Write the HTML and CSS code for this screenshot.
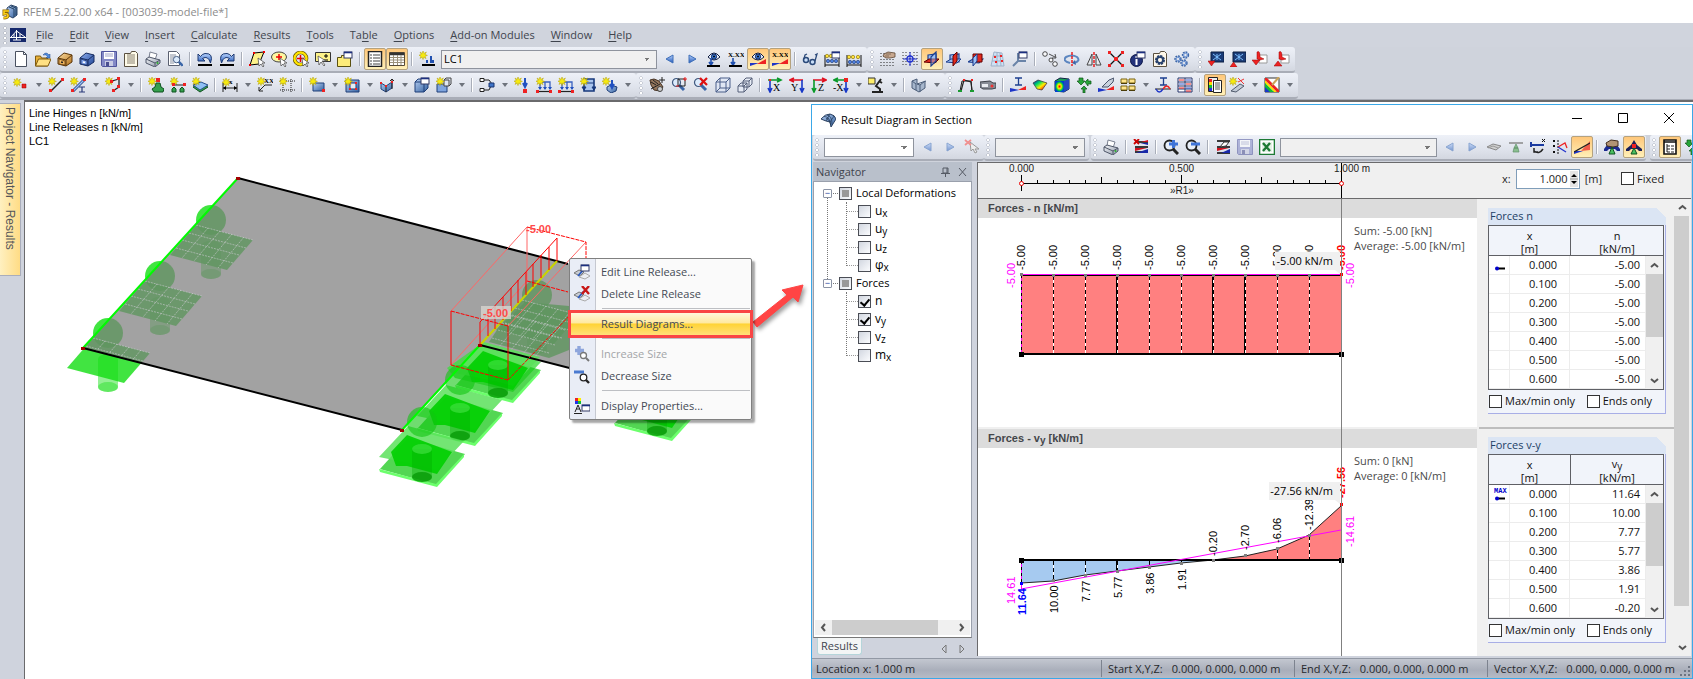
FILE: index.html
```html
<!DOCTYPE html>
<html lang="en">
<head>
<meta charset="utf-8">
<title>RFEM 5.22.00 x64 - [003039-model-file*]</title>
<link rel="stylesheet" href="styles.css">
</head>
<body>
<svg class="defs" aria-hidden="true">
  <defs>
    <linearGradient id="g-blue" x1="0" y1="0" x2="1" y2="1"><stop offset="0" stop-color="#b7d0f4"/><stop offset="1" stop-color="#34619f"/></linearGradient>
    <linearGradient id="g-tan" x1="0" y1="0" x2="1" y2="1"><stop offset="0" stop-color="#ffe2a8"/><stop offset="1" stop-color="#b06c14"/></linearGradient>
    <linearGradient id="g-cab" x1="0" y1="0" x2="1" y2="1"><stop offset="0" stop-color="#8fb0f0"/><stop offset="1" stop-color="#1f4394"/></linearGradient>
    <linearGradient id="g-grey" x1="0" y1="0" x2="1" y2="1"><stop offset="0" stop-color="#f4f6fa"/><stop offset="1" stop-color="#8a93a3"/></linearGradient>
    <radialGradient id="g-fem"><stop offset="0" stop-color="#f00"/><stop offset=".4" stop-color="#fe0"/><stop offset=".75" stop-color="#0c4"/><stop offset="1" stop-color="#04c"/></radialGradient>
    <linearGradient id="g-rain" x1="0" y1="0" x2="1" y2="1"><stop offset="0" stop-color="#00c"/><stop offset=".35" stop-color="#0d6"/><stop offset=".6" stop-color="#fe0"/><stop offset=".85" stop-color="#f20"/></linearGradient>
    <linearGradient id="g-arrow" x1="0" y1="0" x2="0" y2="1"><stop offset="0" stop-color="#bcd6ff"/><stop offset="1" stop-color="#1f56b8"/></linearGradient>
    <path id="star" d="M4 0 5 2.4 7.4 1 6 3.4 8.4 4.4 6 5.2 7 7.6 4.7 6.2 4 8.6 3.2 6.2 1 7.4 2 5.2 0 4.2 2.2 3.4 1 1 3.2 2.4z" fill="#f6ea10" stroke="#b5a000" stroke-width=".5"/>
    <g id="win"><rect x="0" y="0" width="8" height="6" fill="#fff" stroke="#333a66"/><path d="M0 .5h8" stroke="#1c2f80" stroke-width="1.6"/></g>
    <g id="lens"><path d="m6.500 6.500 5.500 5.500" stroke="#3a66a8" stroke-width="3"/><circle cx="4.500" cy="4.500" r="4" fill="#dcebfc" stroke="#3f587e" stroke-width="1.200"/></g>
    <g id="eye"><path d="M0 4q6-8 12 0-6 6-12 0z" fill="#eef4ff" stroke="#101c40"/><circle cx="6" cy="3.600" r="2.600" fill="#3d7cd8" stroke="#0b2560"/><circle cx="6" cy="3.600" r="1" fill="#000"/></g>

    <symbol id="app" viewBox="0 0 16 16"><path d="M5 4 9 1l6 2v8l-4 3-6-3z" fill="url(#g-blue)" stroke="#2c4668"/><path d="m7 3 5 2v8M9 2l5 2v7" fill="none" stroke="#23405e"/><path d="M7 7H2v3q4-1 4 1.500T1.500 14" fill="none" stroke="#8a6500" stroke-width="3"/><path d="M7 7H2v3q4-1 4 1.500T1.500 14" fill="none" stroke="#ffd21a" stroke-width="1.600"/></symbol>
    <symbol id="doc" viewBox="0 0 16 14"><path d="M0 0h16v14H0z" fill="#16296c"/><path d="M0 9.500h16M6.500 2v10M6.500 3 1 9M6.500 3 15 9M4 6v3M10 6v3M3 12h8" stroke="#fff" fill="none"/></symbol>
    <symbol id="dlg" viewBox="0 0 16 16"><path d="M1 7q4-5 9-5 5 1 6 5l-5 8-1-5-4-1z" fill="url(#g-blue)" stroke="#2b4160"/><path d="M4 4.500q5 0 6 5.500M7 3q5 1 5 9M6 9l4-7M10 10l4-6M11 13q-1-5-5-7" stroke="#27405f" stroke-width=".8" fill="none"/></symbol>
    <symbol id="new" viewBox="0 0 16 16"><path d="M2.500.5h8l3 3v12h-11z" fill="#fff" stroke="#4a5160"/><path d="M10.500.5v3h3" fill="none" stroke="#4a5160"/></symbol>
    <symbol id="open" viewBox="0 0 16 16"><path d="M.5 5h5l1 2h6v8H.5z" fill="#e8b13a" stroke="#7e5a10"/><path d="m.5 15 3-7H16l-3 7z" fill="#ffe083" stroke="#7e5a10"/><path d="M8 4q3-4 6 0l1-1v4h-4l1.500-1.500Q11 3 8 4z" fill="#4d8ade" stroke="#234a8c" stroke-width=".5"/></symbol>
    <symbol id="cab" viewBox="0 0 16 16"><path d="m1 7 6-5 8 2v7l-6 4-8-2z" fill="url(#g-tan)" stroke="#5a3508"/><path d="m1 7 8 2v6M9 9l6-5" fill="none" stroke="#5a3508"/><path d="m2 8 6 2v4l-6-1z" fill="#f4b860" stroke="#5a3508" stroke-width=".7"/><path d="m4 11 2 .5" stroke="#222" stroke-width="1.500"/></symbol>
    <symbol id="cabb" viewBox="0 0 16 16"><path d="m1 7 6-5 8 2v7l-6 4-8-2z" fill="url(#g-cab)" stroke="#142a60"/><path d="m1 7 8 2v6M9 9l6-5" fill="none" stroke="#142a60"/><path d="m2 8 6 2v4l-6-1z" fill="#7fa2ea" stroke="#142a60" stroke-width=".7"/><path d="m4 11 2 .5" stroke="#fff" stroke-width="1.500"/></symbol>
    <symbol id="save" viewBox="0 0 16 16"><path d="M.5.5h15v15h-14l-1-1z" fill="#8389c6" stroke="#4f549c"/><path d="M3 1h10v7H3z" fill="#fff"/><path d="M4 3h8M4 5h8" stroke="#a0a4c8"/><path d="M4 10h8v5H4z" fill="#c9cce4"/><path d="M5 11h3v4H5z" fill="#4a4f90"/></symbol>
    <symbol id="tbl" viewBox="0 0 16 16"><path d="M1.500 2.500h6l1-2h4l2 2v13h-13z" fill="#fffbe8" stroke="#5a5040"/><path d="M4 6h8M4 8h8M4 10h8M4 12h8M4 4h8" stroke="#8a8272"/></symbol>
    <symbol id="print" viewBox="0 0 16 16"><path d="m5 1 7 2-2 6-6-2z" fill="#fff" stroke="#7a8090"/><path d="m1 8 3-2 11 3v3l-5 4-9-4z" fill="url(#g-grey)" stroke="#50586a"/><path d="m1 8 9 4 5-3M10 12v3" fill="none" stroke="#50586a"/><circle cx="12.500" cy="12" r="1" fill="#2ab52a"/></symbol>
    <symbol id="prev" viewBox="0 0 16 16"><path d="M1.500.5h8l3 3v11h-11z" fill="#fff" stroke="#5a6070"/><path d="M3 4h6M3 6h5M3 8h3M3 10h3M3 12h4" stroke="#8890a0"/><g transform="translate(6 5) scale(.8)"><use href="#lens"/></g></symbol>
    <symbol id="undo" viewBox="0 0 16 16"><path d="M1 3v7h7L5.500 7.500Q11 4 13.500 12 17 2 8 2.500 5 3 3.500 5.500z" fill="url(#g-arrow)" stroke="#1a3770"/><path d="M1 14h14" stroke="#000" stroke-width="2"/></symbol>
    <symbol id="redo" viewBox="0 0 16 16"><g transform="matrix(-1 0 0 1 16 0)"><path d="M1 3v7h7L5.500 7.500Q11 4 13.500 12 17 2 8 2.500 5 3 3.500 5.500z" fill="url(#g-arrow)" stroke="#1a3770"/><path d="M1 14h14" stroke="#000" stroke-width="2"/></g></symbol>
    <symbol id="selr" viewBox="0 0 16 16"><path d="m5 2 10-1-5 12-9 1z" fill="#fdf28a" stroke="#000"/><path d="M4 1h2v2H4zM14 0h2v2h-2zM0 13h2v2H0z" fill="#e00"/><path d="m9 7 1 8 2-2 2 3 1-1-2-3h3z" fill="#fff" stroke="#555" stroke-width=".8"/></symbol>
    <symbol id="sele" viewBox="0 0 16 16"><ellipse cx="8" cy="6" rx="7.500" ry="5" fill="#fdf6a0" stroke="#444"/><path d="M8 3v6M5 6h6" stroke="#e00" stroke-width="1.500"/><path d="m9 7 1 8 2-2 2 3 1-1-2-3h3z" fill="#fff" stroke="#555" stroke-width=".8"/></symbol>
    <symbol id="selc" viewBox="0 0 16 16"><circle cx="7.500" cy="7.500" r="6" fill="none" stroke="#5a4a00" stroke-width="3.600"/><circle cx="7.500" cy="7.500" r="6" fill="none" stroke="#ffe400" stroke-width="2.400"/><path d="M7.500 4v7M4 7.500h7" stroke="#e00" stroke-width="1.500"/><path d="m9 7 1 8 2-2 2 3 1-1-2-3h3z" fill="#fff" stroke="#555" stroke-width=".8"/></symbol>
    <symbol id="selp" viewBox="0 0 16 16"><path d="M.5 1.500h15v9H.5z" fill="#fdf28a" stroke="#333"/><path d="M11 3v4M9 5h4M9 9h4" stroke="#000"/><path d="m3 5 1 9 2-3 3 4 1-1-3-4h4z" fill="#fff" stroke="#555" stroke-width=".8"/></symbol>
    <symbol id="tabs" viewBox="0 0 16 16"><path d="M.5 6.500h4v-2h4v2h5v9H.5z" fill="#fdec7a" stroke="#5a5010"/><g transform="translate(7 1)"><use href="#win"/></g></symbol>
    <symbol id="pnl1" viewBox="0 0 16 16"><path d="M1.500.5h13v15h-13z" fill="#fff" stroke="#222" stroke-width="1.500"/><path d="M3 4h2M3 7h2M3 10h2M3 13h2M6 4h7M6 7h7M6 10h7M6 13h7" stroke="#444"/></symbol>
    <symbol id="pnl2" viewBox="0 0 16 16"><path d="M.5 1.500h15v13H.5z" fill="#fff" stroke="#554a38"/><path d="M1 3h14" stroke="#333" stroke-width="2.500"/><path d="M1 6.500h14M1 9h14M1 11.500h14M4.500 4v10M8.500 4v10M12 4v10" stroke="#9b917c"/></symbol>
    <symbol id="lc" viewBox="0 0 16 16"><use href="#star"/><path d="M8 9v3M12 5v7M14 9v3" stroke="#2050b0" stroke-width="2"/><path d="M3 14h13" stroke="#000" stroke-width="2"/></symbol>
    <symbol id="la" viewBox="0 0 16 16"><path d="M11 4v8L4 8z" fill="url(#g-arrow)" stroke="#3f6fb8"/></symbol>
    <symbol id="ra" viewBox="0 0 16 16"><path d="M5 4v8l7-4z" fill="url(#g-arrow)" stroke="#3f6fb8"/></symbol>
    <symbol id="eyel" viewBox="0 0 16 16"><g transform="translate(2 2)"><use href="#eye"/></g><path d="M5 7v6m-2-2 2 3 2-3" stroke="#2050b0" stroke-width="1.600" fill="none"/><path d="M1 15h13" stroke="#000" stroke-width="2"/></symbol>
    <symbol id="xxl" viewBox="0 0 16 16"><text x="0" y="6" class="ic-s">X.XX</text><path d="M5 7v6m-2-2 2 3 2-3" stroke="#2050b0" stroke-width="1.600" fill="none"/><path d="M1 15h13" stroke="#000" stroke-width="2"/></symbol>
    <symbol id="eyer" viewBox="0 0 16 16"><g transform="translate(2 2)"><use href="#eye"/></g><path d="M0 15v-3h9z" fill="#1d35c8"/><path d="M16 8v5H7z" fill="#e22"/></symbol>
    <symbol id="xxr" viewBox="0 0 16 16"><text x="0" y="6" class="ic-s">X.XX</text><path d="M0 15v-3h9z" fill="#1d35c8"/><path d="M16 8v5H7z" fill="#e22"/></symbol>
    <symbol id="glass" viewBox="0 0 16 16"><circle cx="4" cy="9" r="2.500" fill="#c9def8" stroke="#2c4a7a" stroke-width="1.500"/><circle cx="10.500" cy="11" r="2.500" fill="#c9def8" stroke="#2c4a7a" stroke-width="1.500"/><path d="M2 8 3 4l2-1M13 10l2-7-2 1" fill="none" stroke="#2c4a7a" stroke-width="1.300"/></symbol>
    <symbol id="abac" viewBox="0 0 16 16"><path d="M1 4v12M15 4v12M1 14h14" stroke="#111" fill="none"/><g fill="#ffe23a" stroke="#806a00" stroke-width=".6"><circle cx="3" cy="5" r="1.700"/><circle cx="7" cy="5" r="1.700"/></g><g fill="#4b7de0" stroke="#1a3570" stroke-width=".6"><circle cx="4" cy="10" r="1.700"/><circle cx="8" cy="10" r="1.700"/><circle cx="12" cy="10" r="1.700"/></g><g transform="translate(8 1)"><use href="#win"/></g></symbol>
    <symbol id="abac2" viewBox="0 0 16 16"><path d="M1 4v12M15 4v12M1 14h14" stroke="#111" fill="none"/><g fill="#ffe23a" stroke="#806a00" stroke-width=".6"><circle cx="3" cy="6" r="1.700"/><circle cx="7" cy="6" r="1.700"/><circle cx="12" cy="6" r="1.700"/></g><g fill="#4b7de0" stroke="#1a3570" stroke-width=".6"><circle cx="4" cy="11" r="1.700"/><circle cx="8" cy="11" r="1.700"/><circle cx="12" cy="11" r="1.700"/></g></symbol>
    <symbol id="gridh" viewBox="0 0 16 16"><path d="M1 2v14M4 2v14M7 2v14M10 2v14M13 2v14" stroke="#222" stroke-dasharray="1 2"/><path d="m4 3 4-2 7 1v4l-5 1-4 0-3-2z" fill="#c8a890" stroke="#5d4634" stroke-width=".8"/><path d="m5 5 4 0m-3-2 5 0" stroke="#5d4634" stroke-width=".6"/></symbol>
    <symbol id="snap" viewBox="0 0 16 16"><path d="M1 1v15M4 1v15M8 1v15M12 1v15M15 1v15" stroke="#333" stroke-dasharray="1 2"/><circle cx="8" cy="8" r="3" fill="none" stroke="#2030d0" stroke-width="1.300"/><path d="M8 1v14M1 8h14" stroke="#2030d0"/></symbol>
    <symbol id="wp1" viewBox="0 0 16 16"><path d="m4 4 8-1v8H4z" fill="#9cc0f4" stroke="#1d3f90" stroke-width="1.200"/><path d="m0 11 5-3h10l-4 4z" fill="#e22a1e" stroke="#600"/><path d="m7 6 5-5v9l-5 5z" fill="#9cc0f4" fill-opacity=".5" stroke="#1d3f90" stroke-width="1.200"/></symbol>
    <symbol id="wp2" viewBox="0 0 16 16"><path d="m4 4 9-1v8H4z" fill="#9cc0f4" stroke="#1d3f90" stroke-width="1.200"/><path d="m0 11 5-3h10l-4 4z" fill="#9cc0f4" stroke="#1d3f90"/><path d="m7 5 4-4v9l-4 5z" fill="#e22a1e" stroke="#600"/></symbol>
    <symbol id="wp3" viewBox="0 0 16 16"><path d="m0 11 5-3h10l-4 4z" fill="#9cc0f4" stroke="#1d3f90" stroke-width="1.200"/><path d="M5 3h9v8H5z" fill="#e22a1e" stroke="#600"/><path d="m5 7 4-4v7l-4 5z" fill="#9cc0f4" stroke="#1d3f90"/></symbol>
    <symbol id="wp4" viewBox="0 0 16 16"><path d="m4 1 8 1 2 13H1z" fill="#cfe0f4" stroke="#9fb2c8"/><path d="M3 5h10M2 10h11M7 1v14M10 2l1 13" stroke="#9fb2c8"/><path d="M4 5h2v2H4zM10 4h2v2h-2zM5 10h2v2H5zM11 9h2v2h-2z" fill="#e22"/></symbol>
    <symbol id="cs" viewBox="0 0 16 16"><path d="M6 2v8l8 0M6 10l-5 5" fill="none" stroke="#6a84a8" stroke-width="2"/><g transform="translate(7 1)"><use href="#win"/></g></symbol>
    <symbol id="copy" viewBox="0 0 16 16"><g fill="#f8f9fb" stroke="#222" stroke-width=".8"><circle cx="3" cy="3" r="2.300"/><circle cx="9" cy="9" r="2"/><circle cx="13" cy="13" r="2.300"/></g><path d="m7 3 6 3m-3 1 4 0-1-4" fill="none" stroke="#222" stroke-width=".8"/></symbol>
    <symbol id="rot" viewBox="0 0 16 16"><path d="M6 12q-8-2-4-6 6-3 11 0 4 4-3 6" fill="none" stroke="#5c86c0" stroke-width="2"/><path d="m11 9-3 3 4 2z" fill="#3c66a8"/><path d="M8 1v14" stroke="#e00" stroke-width="1.300" stroke-dasharray="3 1"/></symbol>
    <symbol id="mir" viewBox="0 0 16 16"><path d="M6 3v11H1zM10 3v11h5z" fill="#e8ebf0" stroke="#444"/><path d="M8 1v15" stroke="#e00" stroke-width="1.300" stroke-dasharray="3 1"/></symbol>
    <symbol id="cross" viewBox="0 0 16 16"><path d="m1 1 14 14M15 1 1 15" stroke="#111" stroke-width="1.300"/><path d="M0 0h3v3H0zM13 0h3v3h-3zM0 13h3v3H0zM13 13h3v3h-3zM6 6h4v4H6z" fill="#e22"/></symbol>
    <symbol id="info" viewBox="0 0 16 16"><circle cx="6.500" cy="9.500" r="6" fill="#23327a" stroke="#0c1648"/><path d="M6.500 8v6M6.500 5v2" stroke="#fff" stroke-width="2"/><g transform="translate(7 1)"><use href="#win"/></g></symbol>
    <symbol id="gearc" viewBox="0 0 16 16"><path d="M1.500 2.500h6l1-2h4l2 2v13h-13z" fill="#fff8ea" stroke="#5a5040"/><circle cx="8" cy="9" r="3.500" fill="none" stroke="#27406c" stroke-width="3" stroke-dasharray="2 .7"/><circle cx="8" cy="9" r="3" fill="none" stroke="#27406c" stroke-width="1.500"/></symbol>
    <symbol id="gears" viewBox="0 0 16 16"><g fill="none" stroke="#3c66a8" stroke-width="2.400" stroke-dasharray="1.600 .7"><circle cx="4" cy="8" r="2.500"/><circle cx="11.500" cy="4" r="2.500"/><circle cx="10" cy="12" r="2.500"/></g><g fill="none" stroke="#7ea2dc"><circle cx="4" cy="8" r="2"/><circle cx="11.500" cy="4" r="2"/><circle cx="10" cy="12" r="2"/></g></symbol>
    <symbol id="mn1" viewBox="0 0 16 16"><path d="M3 1h13v10H3z" fill="#1b3c78" stroke="#0b1c40"/><path d="m5 3 8 6m0-6-8 6M9 3v6" stroke="#7fc0ff"/><path d="M0 10h7l-3.500 5z" fill="#e22" stroke="#900" stroke-width=".5"/></symbol>
    <symbol id="mn2" viewBox="0 0 16 16"><path d="M3 1h13v10H3z" fill="#1b3c78" stroke="#0b1c40"/><path d="m5 3 8 6m0-6-8 6M9 3v6" stroke="#7fc0ff"/><path d="M0 16h7l-3.500-5z" fill="#e22" stroke="#900" stroke-width=".5"/></symbol>
    <symbol id="mn3" viewBox="0 0 16 16"><path d="M7 4h8v8H7z" fill="#fff" stroke="#999"/><path d="M5 1q3-2 3 5l4 2-4 1-3-1z" fill="#e22" stroke="#900" stroke-width=".5"/><path d="M0 9h8l-4 5z" fill="#e22" stroke="#900" stroke-width=".5"/></symbol>
    <symbol id="mn4" viewBox="0 0 16 16"><path d="M7 4h8v8H7z" fill="#fff" stroke="#999"/><path d="M5 1q3-2 3 5l4 2-4 1-3-1z" fill="#e22" stroke="#900" stroke-width=".5"/><path d="M0 15h8l-4-5z" fill="#e22" stroke="#900" stroke-width=".5"/></symbol>

    <symbol id="node" viewBox="0 0 16 16"><use href="#star" y="1"/><path d="M9 7h4v4H9z" fill="#e22" stroke="#900" stroke-width=".5"/></symbol>
    <symbol id="line" viewBox="0 0 16 16"><use href="#star"/><path d="M3 14 14 3" stroke="#222" stroke-width="1.500"/><path d="M1 12h3v3H1zM13 1h3v3h-3z" fill="#e22"/></symbol>
    <symbol id="memb" viewBox="0 0 16 16"><use href="#star"/><path d="M3 14 14 3" stroke="#2c4a8a" stroke-width="3"/><path d="M3 14 14 3" stroke="#9cc0f4" stroke-width="1.300"/><path d="M1 12h3v3H1zM13 1h3v3h-3z" fill="#e22"/><path d="M9 10h6M12 10v5M9 15h6" stroke="#2a3a7a" stroke-width="1.200"/></symbol>
    <symbol id="poly" viewBox="0 0 16 16"><use href="#star"/><path d="m7 4 7-2v8l-6 4" fill="none" stroke="#222" stroke-width="1.300"/><path d="M5 3h3v3H5zM12 0h3v3h-3zM12 8h3v3h-3zM7 12h3v3H7z" fill="#e22"/></symbol>
    <symbol id="sup1" viewBox="0 0 16 16"><path d="M8 6h4l1 4 3 2-1 3H6l-2-3 3-2z" fill="#35a04c" stroke="#0f5220"/><path d="M8 1h4v4H8z" fill="#e22"/><use href="#star"/></symbol>
    <symbol id="sup2" viewBox="0 0 16 16"><use href="#star"/><path d="M4 8h11" stroke="#222"/><path d="M2 6h3v3H2zM13 6h3v3h-3z" fill="#e22"/><path d="m4 10 2 2v3H2v-3zM12 10l2 2v3h-4v-3z" fill="#35a04c" stroke="#0f5220"/></symbol>
    <symbol id="sup3" viewBox="0 0 16 16"><path d="m1 10 8-3 7 3-8 5z" fill="#35a04c" stroke="#0f5220"/><path d="m1 8 8-3 7 3-8 5z" fill="#8fc0f4" stroke="#28508c"/><use href="#star"/></symbol>
    <symbol id="dim" viewBox="0 0 16 16"><use href="#star" y="1"/><path d="M1 6v9M15 6v9M1 11h14" stroke="#222"/><path d="m1 11 3-2v4zM15 11l-3-2v4z"/><text x="7" y="7" class="ic-s">x</text></symbol>
    <symbol id="note" viewBox="0 0 16 16"><use href="#star"/><text x="7" y="6" class="ic-s">XX</text><path d="M15 8H8l-6 6m0-4v4h4" fill="none" stroke="#222"/></symbol>
    <symbol id="gline" viewBox="0 0 16 16"><path d="M4 2v14M12 2v14M1 4h15M1 13h15" stroke="#222" stroke-dasharray="1 1"/><use href="#star"/></symbol>
    <symbol id="surf" viewBox="0 0 16 16"><path d="M4 6h11v8H4z" fill="url(#g-blue)" stroke="#1f3f78"/><path d="M13 12h3v3h-3z" fill="#e22"/><use href="#star"/></symbol>
    <symbol id="opng" viewBox="0 0 16 16"><path d="M2 3h13v12H2z" fill="url(#g-blue)" stroke="#1f3f78"/><path d="M6 6h6v6H6z" fill="#e8ecf4" stroke="#1f3f78"/><path d="M5 5h2v2H5zM11 5h2v2h-2zM5 11h2v2H5zM11 11h2v2h-2z" fill="#e22"/><use href="#star"/></symbol>
    <symbol id="fold" viewBox="0 0 16 16"><path d="m2 6 5 3 6-4v6l-6 4-5-3z" fill="url(#g-blue)" stroke="#1f3f78"/><path d="M7 9v6M13 2v10m-2-8 2-2 2 2" stroke="#222" fill="none"/><path d="M1 5h2v2H1zM6 8h2v2H6zM12 4h2v2h-2z" fill="#e22"/></symbol>
    <symbol id="solid" viewBox="0 0 16 16"><path d="m1 5 3-3h10v9l-4 4H1z" fill="url(#g-blue)" stroke="#1f3f78"/><path d="M1 5h9v10M10 5l4-3" fill="none" stroke="#1f3f78"/><g transform="translate(7 1)"><use href="#win"/></g></symbol>
    <symbol id="block" viewBox="0 0 16 16"><path d="M1 7h10v8H1z" fill="#7ea4de" stroke="#1f3f78"/><path d="M8 3h5v6H8zM8 3l2-2h5v6l-2 2" fill="#dfe6f2" stroke="#444"/><use href="#star"/></symbol>
    <symbol id="tree" viewBox="0 0 16 16"><path d="M1 1.500h4v3H1zM1 11.500h4v3H1z" fill="#fff" stroke="#222"/><path d="M5 3h5l3 4M5 13h5l2-4" fill="none" stroke="#222"/><path d="M10 6h5v4h-5z" fill="#3f74c8" stroke="#1a3570"/></symbol>
    <symbol id="nload" viewBox="0 0 16 16"><use href="#star"/><path d="M11 1v8m-2-3 2 4 2-4" stroke="#2050c0" stroke-width="2" fill="none"/><path d="M9 12h4v4H9z" fill="#e22"/></symbol>
    <symbol id="lload" viewBox="0 0 16 16"><path d="M3 5h11v7M4 5v7M9 5v7" fill="none" stroke="#3a62c0" stroke-width="1.300"/><path d="m2 10 2 3 2-3zM7 10l2 3 2-3zM12 10l2 3 2-3z" fill="#2050c0"/><path d="M1 14.500h14" stroke="#222" stroke-width="1.200"/><path d="M0 13h3v3H0zM13 13h3v3h-3z" fill="#e22"/><use href="#star"/></symbol>
    <symbol id="sload" viewBox="0 0 16 16"><path d="M4 2h10v12H4z" fill="#a8c4ee" stroke="#17397c" stroke-width="1.600"/><path d="M4 6h10" stroke="#17397c"/><path d="m2 10 2 3 2-3zM12 10l2 3 2-3z" fill="#17397c" stroke="#17397c"/><use href="#star"/></symbol>
    <symbol id="fload" viewBox="0 0 16 16"><path d="m5 10 4-2 6 2-1 4-5 2-4-3z" fill="url(#g-blue)" stroke="#1f3f78"/><path d="M10 3v7m-2-3 2 4 2-4" fill="none" stroke="#2050c0" stroke-width="2"/><use href="#star"/></symbol>

    <symbol id="hand" viewBox="0 0 16 16"><path d="m1 3 4-1 5 2 2 3 2 3-3 4-6-1-3-5z" fill="#94765c" stroke="#443020"/><path d="m2 5 5 3m-3-5 5 4M2 12l9-5M13 0v6M10 3h6" stroke="#222"/><circle cx="11" cy="12" r="2.500" fill="#ccc" stroke="#444"/></symbol>
    <symbol id="zwin" viewBox="0 0 16 16"><g transform="translate(1 1)"><use href="#lens"/></g><path d="M7 2h7v7H7z" fill="none" stroke="#222"/><path d="M14 0v4M12 2h4M5 9h3" stroke="#e22"/></symbol>
    <symbol id="zx" viewBox="0 0 16 16"><g transform="translate(1 1)"><use href="#lens"/></g><path d="m7 1 7 7M14 1 7 8" stroke="#e01010" stroke-width="2.200"/></symbol>
    <symbol id="box3" viewBox="0 0 16 16"><path d="M1 5h10v10H1zM1 5l4-4h10v10l-4 4M11 5l4-4M5 1v10h10M5 11l-4 4" fill="#dde6f6" fill-opacity=".6" stroke="#4a5f8a"/></symbol>
    <symbol id="box2" viewBox="0 0 16 16"><path d="M6 4h6v6H6zM6 4l3-3h6v6l-3 3M12 4l3-3M1 9h6v6H1zM1 9l3-3h6v6l-3 3M7 9l3-3" fill="#e6ebf5" stroke="#555f78"/></symbol>
    <symbol id="vx" viewBox="0 0 16 16"><path d="M1 3h12m-3-2 4 2-4 2" stroke="#0a9a2a" stroke-width="1.600" fill="none"/><path d="M3 3v11m-2-3 2 4 2-4" stroke="#1838c8" stroke-width="1.600" fill="none"/><text x="6" y="14" class="ic-m">X</text><path d="M2 2h2v2H2z" fill="#e22"/></symbol>
    <symbol id="vy" viewBox="0 0 16 16"><path d="M2 3h12M5 1 1 3l4 2" stroke="#e01020" stroke-width="1.600" fill="none"/><path d="M13 3v11m-2-3 2 4 2-4" stroke="#1838c8" stroke-width="1.600" fill="none"/><text x="2" y="14" class="ic-m">Y</text></symbol>
    <symbol id="vz" viewBox="0 0 16 16"><path d="M2 3h12m-3-2 4 2-4 2" stroke="#e01020" stroke-width="1.600" fill="none"/><path d="M3 3v11m-2-3 2 4 2-4" stroke="#0a9a2a" stroke-width="1.600" fill="none"/><text x="7" y="14" class="ic-m">Z</text></symbol>
    <symbol id="vmx" viewBox="0 0 16 16"><path d="M2 3h10M5 1 1 3l4 2" stroke="#0a9a2a" stroke-width="1.600" fill="none"/><path d="M13 3v11m-2-3 2 4 2-4" stroke="#1838c8" stroke-width="1.600" fill="none"/><text x="0" y="14" class="ic-m">-X</text><path d="M11 1h4v4h-4z" fill="#e22"/></symbol>
    <symbol id="mic" viewBox="0 0 16 16"><path d="m13 2-5 7 4 3v3M4 15h11M11 4l3 2" stroke="#222" stroke-width="2" fill="none"/><path d="M0 1h7v6H0z" fill="#ffee6a" stroke="#333"/></symbol>
    <symbol id="vis" viewBox="0 0 16 16"><path d="m1 4 5-2v5l3 1 5-4v7l-6 4-7-4z" fill="#a6b6cc" stroke="#4b5d78"/><path d="m1 4 4 3v6M6 7l9-3M9 8v7" fill="none" stroke="#4b5d78"/></symbol>
    <symbol id="frame" viewBox="0 0 16 16"><path d="M2 14 4 4h9l1 10" fill="none" stroke="#222"/><path d="M3 14 6 3l7 2 1 9" fill="none" stroke="#222" stroke-width="1.200"/><path d="M5 2h2v2H5zM13 2h2v2h-2z" fill="#e22"/><path d="M0 13h4v2H0zM12 13h4v2h-4z" fill="#1a9a30"/></symbol>
    <symbol id="cam" viewBox="0 0 16 16"><path d="m0 5 10-1 3 2h3v5l-4 1H3l-3-2z" fill="#888d96" stroke="#3c4048"/><path d="M2 7h6v3H2z" fill="#e9ecf0"/><circle cx="12" cy="9" r="1.500" fill="#e33"/></symbol>
    <symbol id="ires" viewBox="0 0 16 16"><path d="M5 1h7M8.500 1v7M5 8h7" stroke="#1d3f90" stroke-width="1.300"/><path d="M0 15v-4l9 2z" fill="#1d35c8"/><path d="M16 9v4l-8 0z" fill="#e22"/></symbol>
    <symbol id="srf" viewBox="0 0 16 16"><path d="m1 6 5-3 9 3-5 7-5-1z" fill="url(#g-rain)" stroke="#333" stroke-width=".7"/></symbol>
    <symbol id="cube" viewBox="0 0 16 16"><path d="m1 4 5-3 9 1v10l-5 3-9-1z" fill="#1aa05a" stroke="#124"/><path d="M1 4h9v11H1z" fill="url(#g-fem)"/><path d="m10 4 5-2v10l-5 3z" fill="#2448c0"/></symbol>
    <symbol id="grn" viewBox="0 0 16 16"><path d="M3 1h4v3h2L5 8 1 4h2zM9 5l3-3v2h3v3h-3v2zM8 9l3 3H9v4H7v-4H5z" fill="#27a53a" stroke="#0e5519" stroke-width=".7"/></symbol>
    <symbol id="knife" viewBox="0 0 16 16"><path d="m4 10 7-7 5-2-1 4-5 5z" fill="#c9d2de" stroke="#48536a"/><path d="M0 15v-4l9 2z" fill="#1d35c8"/><path d="M16 9v4l-8 0z" fill="#e22"/></symbol>
    <symbol id="four" viewBox="0 0 16 16"><path d="M1 2h6v4H1zM9 2h6v4H9zM1 9h6v4H1zM9 9h6v4H9z" fill="#ffe48a" stroke="#7a6410"/><path d="M1 6.500h6M9 6.500h6M1 13.500h6M9 13.500h6" stroke="#4a3c08"/></symbol>
    <symbol id="icrv" viewBox="0 0 16 16"><path d="M5 1h7M8.500 1v7M5 8h7" stroke="#1d3f90" stroke-width="1.300"/><path d="M0 12h16" stroke="#222"/><path d="M8 12q4-6 7 0" fill="none" stroke="#e22" stroke-width="1.500"/><path d="M1 12q3 6 7 0" fill="none" stroke="#1d35c8" stroke-width="1.500"/></symbol>
    <symbol id="rtab" viewBox="0 0 16 16"><path d="M1 1h14v14H1z" fill="#fff" stroke="#26346a"/><path d="M1 5h14M1 9h14M1 12h14M8 1v14" stroke="#26346a"/><path d="M2 3h5M9 7h5M2 11h5M9 14h5" stroke="#e22"/><path d="M9 3h5M2 7h5M9 11h5" stroke="#35c"/></symbol>
    <symbol id="cpan" viewBox="0 0 16 16"><path d="M1.500.5h9v14h-9z" fill="#eee" stroke="#222"/><path d="M2 2h3v3H2z" fill="#e22"/><path d="M2 5h3v3H2z" fill="#fd0"/><path d="M2 8h3v3H2z" fill="#1b3"/><path d="M2 11h3v3H2z" fill="#23d"/><path d="M6.500 3.500h8v12h-8z" fill="#fff" stroke="#222"/><path d="M8 6h5M8 8h5M8 10h5M8 12h5" stroke="#555"/></symbol>
    <symbol id="wand" viewBox="0 0 16 16"><path d="m2 14 9-7 4 2-8 6z" fill="#c2cad6" stroke="#505a6c"/><path d="m9 1 6 6M15 2 9 5" stroke="#e33"/><use href="#star"/></symbol>
    <symbol id="rb" viewBox="0 0 16 16"><path d="M1 1h14v14H1z" fill="#fff" stroke="#333"/><path d="M1 9v6h6z" fill="#1838c8"/><path d="m1 3 12 12h-3L1 6z" fill="#fd0"/><path d="M1 6v4l5 5h4z" fill="#1b3"/><path d="M1 1h2l12 12v2h-2L1 3z" fill="#e22"/><path d="m8 8 7-8" stroke="#caa45a" stroke-width="2"/></symbol>

    <symbol id="arx" viewBox="0 0 16 16"><path d="m6 3 1 9 2-2 2 4 2-1-2-3h4z" fill="#eee" stroke="#999"/><path d="m1 1 6 5M7 1 1 6" stroke="#f09090" stroke-width="1.800"/></symbol>
    <symbol id="delr" viewBox="0 0 16 16"><path d="M2 3h13M2 8h13M2 13h13" stroke="#000" stroke-width="1.500"/><path d="M7 4h8v2zM3 14l12-4v4z" fill="#1828a8"/><path d="M8 3l7-2v2zM2 9h12l-12 3z" fill="#d01020"/><path d="m1 0 5 5M6 0 1 5" stroke="#c00" stroke-width="1.800"/></symbol>
    <symbol id="zin" viewBox="0 0 16 16"><circle cx="6.500" cy="6.500" r="5" fill="#e8eef8" stroke="#222" stroke-width="1.800"/><path d="m10 10 5 5" stroke="#222" stroke-width="3"/><path d="M10.500 1v8M6 5h9" stroke="#3f74d8" stroke-width="3"/></symbol>
    <symbol id="zout" viewBox="0 0 16 16"><circle cx="6.500" cy="6.500" r="5" fill="#e8eef8" stroke="#222" stroke-width="1.800"/><path d="m10 10 5 5" stroke="#222" stroke-width="3"/><path d="M6 5h9" stroke="#3f74d8" stroke-width="3"/></symbol>
    <symbol id="sect" viewBox="0 0 16 16"><path d="M2 2h13M2 8h13M2 14h13" stroke="#000" stroke-width="1.500"/><path d="m5 8 4-5h5l-3 4z" fill="#fff" stroke="#333"/><path d="M2 9h12l-12 3z" fill="#d01020"/><path d="M6 14h9v-4z" fill="#1828a8"/></symbol>
    <symbol id="xls" viewBox="0 0 16 16"><path d="M.5.5h15v15H.5z" fill="#fff" stroke="#1d7a34" stroke-width="1.600"/><path d="M3 3h10v10H3z" fill="#e5f2e6"/><path d="m4 4 7 8M11 4l-7 8" stroke="#1d7a34" stroke-width="2.400"/></symbol>
    <symbol id="slab" viewBox="0 0 16 16"><path d="m1 8 6-3 8 2-5 4z" fill="#d0d0d0" stroke="#888"/><path d="m2 9 5-2 5 2" fill="none" stroke="#999"/></symbol>
    <symbol id="supg" viewBox="0 0 16 16"><path d="M1 4h14" stroke="#888" stroke-width="1.500"/><path d="M8 5 6 9h4zM6 9h4l1 4H5z" fill="#8abf90" stroke="#5f8f68" stroke-width=".7"/></symbol>
    <symbol id="flip" viewBox="0 0 16 16"><path d="M1 6h13M1 3v5" stroke="#1a3aa0" stroke-width="2"/><path d="M13 10q-4 6-9 2m0-3v4h4" fill="none" stroke="#222" stroke-width="1.500"/><path d="m12 0 3 3m0-3-3 3" stroke="#111"/></symbol>
    <symbol id="bran" viewBox="0 0 16 16"><path d="M6 1v14" stroke="#111" stroke-dasharray="2 1"/><path d="m1 1 2 2m0-2L1 3M1 6l2 2m0-2L1 8M1 12l2 2m0-2-2 2" stroke="#111"/><path d="m6 8 7-4 2 5" fill="none" stroke="#e22" stroke-width="1.300"/><path d="m6 8 8 5" stroke="#23c" stroke-width="1.300"/></symbol>
    <symbol id="slop" viewBox="0 0 16 16"><path d="M0 12h9l-9 3z" fill="#1d35c8"/><path d="M16 2v9l-9 1z" fill="#f25a4a"/><path d="m0 13 16-9" stroke="#222" stroke-width="1.300"/></symbol>
    <symbol id="hsup" viewBox="0 0 16 16"><path d="m0 10 3-4h10l3 4v2h-3l-2-2H5l-2 2H0z" fill="#1a2a90"/><path d="m2 4 5-3 7 1v5l-5 1-6-1z" fill="#b29474" stroke="#443020"/><path d="m8 8 3 7H5z" fill="#4ac060" stroke="#0f5220"/></symbol>
    <symbol id="rsup" viewBox="0 0 16 16"><path d="m0 10 5-4 3-5 3 5 5 4v2h-3l-2-2H5l-2 2H0z" fill="#1b1f58"/><path d="M6 5h4v4H6z" fill="#e22"/><path d="m8 9 3 6H5z" fill="#4ac060" stroke="#0f5220"/></symbol>
    <symbol id="nav" viewBox="0 0 16 16"><path d="M2 1h12v14H2z" fill="#fff" stroke="#111" stroke-width="1.600"/><path d="M2 3h12" stroke="#111" stroke-width="1.500"/><path d="M5 5v8M5 7h3M5 10h3M5 13h3M9 7h3M9 10h3M9 13h3" stroke="#222"/></symbol>

    <symbol id="lre" viewBox="0 0 16 16"><path d="m0 9 5-3 5 2-4 4z" fill="#c8ccd2" stroke="#777"/><path d="m5 13 6-4 5 3-5 3z" fill="#eceef2" stroke="#aaa"/><path d="m4 12 6-7" stroke="#2a5ac0" stroke-width="1.800"/><g transform="translate(7 1)"><use href="#win"/></g></symbol>
    <symbol id="lrd" viewBox="0 0 16 16"><path d="m0 9 5-3 5 2-4 4z" fill="#c8ccd2" stroke="#777"/><path d="m5 13 6-4 5 3-5 3z" fill="#eceef2" stroke="#aaa"/><path d="m4 12 6-7" stroke="#2a5ac0" stroke-width="1.800"/><path d="m8 0 7 8M15 0 8 8" stroke="#c81818" stroke-width="2.400"/></symbol>
    <symbol id="inc" viewBox="0 0 16 16"><path d="M5 0v9M1 4.500h9" stroke="#8fa6dc" stroke-width="3.400"/><circle cx="9.500" cy="9.500" r="3" fill="#fff" stroke="#777" stroke-width="1.300"/><path d="m12 12 3 3" stroke="#777" stroke-width="2"/></symbol>
    <symbol id="dec" viewBox="0 0 16 16"><path d="M0 4h10" stroke="#4a7ad0" stroke-width="3"/><circle cx="9.500" cy="9.500" r="3.300" fill="#fff" stroke="#222" stroke-width="1.300"/><path d="m12 12 3 3" stroke="#222" stroke-width="2.400"/></symbol>
    <symbol id="dprop" viewBox="0 0 16 16"><path d="M1 0h3v3H1z" fill="#e22"/><path d="M4 0h3v3H4z" fill="#fe0"/><path d="M1 3h3v3H1z" fill="#23e"/><path d="M4 3h3v3H4z" fill="#1b3"/><path d="M4 7 1 14M4 7l3 7M2 11h4M0 15.500h8" stroke="#222" fill="none"/><g transform="translate(8 7)"><use href="#win"/></g></symbol>

    <g id="support">
      <path d="m-41 35 57 15 26-30-57-15z" fill-opacity=".8"/>
      <circle r="15" fill-opacity=".8"/>
      <path d="M-10 26v28a10 5 0 0 0 20 0V26a10 5 0 0 0-20 0z" fill-opacity=".45"/>
      <ellipse cy="54" rx="10" ry="5" fill-opacity=".4"/>
    </g>
    <g id="padgrid" fill="none" stroke="#c9c9cf" stroke-opacity=".6" stroke-dasharray="2 1">
      <path d="m-15 5 57 15M-22 13l57 15M-29 20l57 15M-35 28l57 15M-3 8l-26 30M9 11l-26 30M21 14-5 45M33 17 7 48"/>
    </g>
    <g id="pad2">
      <path d="m-42 47 28-31 57 16-28 31z" fill="#19c819" fill-opacity=".75"/>
      <path d="m-43 47 57 15 28-30v3L15 65l-57-15z" fill="#6cff6c"/>
      <path d="m-43 35 29-31 56 15-27 29-14-4z" fill="#5be05b" fill-opacity=".85"/>
      <path d="m-31 30 16-17 45 17-15 22-30-8-11 0z" fill="#00cf00" fill-opacity=".9"/>
      <path d="M-10 27v28a10 5 0 0 0 20 0V27" fill="#00a800" fill-opacity=".35"/>
      <ellipse cy="27" rx="10" ry="5" fill="#3fe03f" fill-opacity=".7"/>
      <ellipse cy="55" rx="10" ry="5" fill="#009400" fill-opacity=".7"/>
    </g>
    <clipPath id="plate-clip"><path d="m239 178 351 91v104l-109-28-78 85-319-82z"/></clipPath>
  </defs>
</svg>

<header class="titlebar"><svg class="i16"><use href="#app"/></svg><h1>RFEM 5.22.00 x64 - [003039-model-file*]</h1></header>
<nav class="menubar">
  <span class="grip"></span><svg class="docicon"><use href="#doc"/></svg>
  <button><u>F</u>ile</button><button><u>E</u>dit</button><button><u>V</u>iew</button><button><u>I</u>nsert</button><button><u>C</u>alculate</button><button><u>R</u>esults</button><button><u>T</u>ools</button><button>Ta<u>b</u>le</button><button><u>O</u>ptions</button><button><u>A</u>dd-on Modules</button><button><u>W</u>indow</button><button><u>H</u>elp</button>
</nav>

<div class="dock">
  <div class="toolbar">
    <span class="grip"></span>
    <button class="tb" aria-label="New"><svg><use href="#new"/></svg></button>
    <button class="tb" aria-label="Open"><svg><use href="#open"/></svg></button>
    <button class="tb" aria-label="Project manager"><svg><use href="#cab"/></svg></button>
    <button class="tb" aria-label="Block manager"><svg><use href="#cabb"/></svg></button>
    <button class="tb" aria-label="Save"><svg><use href="#save"/></svg></button>
    <button class="tb" aria-label="Tables"><svg><use href="#tbl"/></svg></button>
    <button class="tb" aria-label="Print"><svg><use href="#print"/></svg></button>
    <button class="tb" aria-label="Preview"><svg><use href="#prev"/></svg></button>
    <span class="sep"></span>
    <button class="tb" aria-label="Undo"><svg><use href="#undo"/></svg></button>
    <button class="tb" aria-label="Redo"><svg><use href="#redo"/></svg></button>
    <span class="sep"></span>
    <button class="tb" aria-label="Select rhomboid"><svg><use href="#selr"/></svg></button>
    <button class="tb" aria-label="Select ellipse"><svg><use href="#sele"/></svg></button>
    <button class="tb" aria-label="Select ring"><svg><use href="#selc"/></svg></button>
    <button class="tb" aria-label="Special selection"><svg><use href="#selp"/></svg></button>
    <button class="tb" aria-label="Edit selection"><svg><use href="#tabs"/></svg></button>
    <span class="sep"></span>
    <button class="tb on" aria-label="Navigator"><svg><use href="#pnl1"/></svg></button>
    <button class="tb on" aria-label="Table"><svg><use href="#pnl2"/></svg></button>
    <span class="sep"></span>
    <button class="tb" aria-label="New load case"><svg><use href="#lc"/></svg></button>
    <select class="lc-select" aria-label="Load case"><option>LC1</option></select>
    <button class="tb" aria-label="Previous load case"><svg><use href="#la"/></svg></button>
    <button class="tb" aria-label="Next load case"><svg><use href="#ra"/></svg></button>
    <button class="tb" aria-label="Show loads"><svg><use href="#eyel"/></svg></button>
    <button class="tb" aria-label="Show load values"><svg><use href="#xxl"/></svg></button>
    <button class="tb on" aria-label="Show results"><svg><use href="#eyer"/></svg></button>
    <button class="tb on" aria-label="Show result values"><svg><use href="#xxr"/></svg></button>
    <span class="sep"></span>
    <button class="tb" aria-label="Visibility"><svg><use href="#glass"/></svg></button>
    <button class="tb" aria-label="Calculation parameters"><svg><use href="#abac"/></svg></button>
    <button class="tb" aria-label="Calculate"><svg><use href="#abac2"/></svg></button>
  </div>
  <div class="toolbar">
    <span class="grip"></span>
    <button class="tb" aria-label="Work plane"><svg><use href="#gridh"/></svg></button>
    <button class="tb" aria-label="Snap"><svg><use href="#snap"/></svg></button>
    <button class="tb on" aria-label="Plane XY"><svg><use href="#wp1"/></svg></button>
    <button class="tb" aria-label="Plane YZ"><svg><use href="#wp2"/></svg></button>
    <button class="tb" aria-label="Plane XZ"><svg><use href="#wp3"/></svg></button>
    <button class="tb" aria-label="Generated grid"><svg><use href="#wp4"/></svg></button>
    <button class="tb" aria-label="Coordinate system"><svg><use href="#cs"/></svg></button>
    <span class="sep"></span>
    <button class="tb" aria-label="Copy"><svg><use href="#copy"/></svg></button>
    <button class="tb" aria-label="Rotate"><svg><use href="#rot"/></svg></button>
    <button class="tb" aria-label="Mirror"><svg><use href="#mir"/></svg></button>
    <button class="tb" aria-label="Connect"><svg><use href="#cross"/></svg></button>
    <button class="tb" aria-label="Info"><svg><use href="#info"/></svg></button>
    <button class="tb" aria-label="Settings"><svg><use href="#gearc"/></svg></button>
    <button class="tb" aria-label="Modules"><svg><use href="#gears"/></svg></button>
  </div>
  <div class="toolbar">
    <span class="grip"></span>
    <button class="tb" aria-label="Import"><svg><use href="#mn1"/></svg></button>
    <button class="tb" aria-label="Export"><svg><use href="#mn2"/></svg></button>
    <button class="tb" aria-label="PDF import"><svg><use href="#mn3"/></svg></button>
    <button class="tb" aria-label="PDF export"><svg><use href="#mn4"/></svg></button>
  </div>
</div>
<div class="dock">
  <div class="toolbar">
    <span class="grip"></span>
    <button class="tb" aria-label="Node"><svg><use href="#node"/></svg></button><button class="dd" aria-label="More"></button>
    <button class="tb" aria-label="Line"><svg><use href="#line"/></svg></button>
    <button class="tb" aria-label="Member"><svg><use href="#memb"/></svg></button><button class="dd" aria-label="More"></button>
    <button class="tb" aria-label="Polyline"><svg><use href="#poly"/></svg></button><button class="dd" aria-label="More"></button>
    <span class="sep"></span>
    <button class="tb" aria-label="Nodal support"><svg><use href="#sup1"/></svg></button>
    <button class="tb" aria-label="Line support"><svg><use href="#sup2"/></svg></button>
    <button class="tb" aria-label="Surface support"><svg><use href="#sup3"/></svg></button>
    <span class="sep"></span>
    <button class="tb" aria-label="Dimension"><svg><use href="#dim"/></svg></button><button class="dd" aria-label="More"></button>
    <button class="tb" aria-label="Comment"><svg><use href="#note"/></svg></button>
    <button class="tb" aria-label="Guidelines"><svg><use href="#gline"/></svg></button>
    <span class="sep"></span>
    <button class="tb" aria-label="Surface"><svg><use href="#surf"/></svg></button><button class="dd" aria-label="More"></button>
    <button class="tb" aria-label="Opening"><svg><use href="#opng"/></svg></button><button class="dd" aria-label="More"></button>
    <button class="tb" aria-label="Folded surface"><svg><use href="#fold"/></svg></button><button class="dd" aria-label="More"></button>
    <button class="tb" aria-label="Solid"><svg><use href="#solid"/></svg></button>
    <button class="tb" aria-label="Block"><svg><use href="#block"/></svg></button><button class="dd" aria-label="More"></button>
    <span class="sep"></span>
    <button class="tb" aria-label="Structure"><svg><use href="#tree"/></svg></button><button class="dd" aria-label="More"></button>
    <button class="tb" aria-label="Nodal load"><svg><use href="#nload"/></svg></button>
    <button class="tb" aria-label="Member load"><svg><use href="#lload"/></svg></button>
    <button class="tb" aria-label="Line load"><svg><use href="#lload"/></svg></button>
    <button class="tb" aria-label="Surface load"><svg><use href="#sload"/></svg></button>
    <button class="tb" aria-label="Free load"><svg><use href="#fload"/></svg></button><button class="dd" aria-label="More"></button>
  </div>
  <div class="toolbar">
    <span class="grip"></span>
    <button class="tb" aria-label="Pan"><svg><use href="#hand"/></svg></button>
    <button class="tb" aria-label="Zoom window"><svg><use href="#zwin"/></svg></button>
    <button class="tb" aria-label="Zoom all"><svg><use href="#zx"/></svg></button>
    <button class="tb" aria-label="Isometric"><svg><use href="#box3"/></svg></button>
    <button class="tb" aria-label="Perspective"><svg><use href="#box2"/></svg></button>
    <span class="sep"></span>
    <button class="tb" aria-label="View X"><svg><use href="#vx"/></svg></button>
    <button class="tb" aria-label="View Y"><svg><use href="#vy"/></svg></button>
    <button class="tb" aria-label="View Z"><svg><use href="#vz"/></svg></button>
    <button class="tb" aria-label="View minus X"><svg><use href="#vmx"/></svg></button><button class="dd" aria-label="More"></button>
    <button class="tb" aria-label="Inspect"><svg><use href="#mic"/></svg></button><button class="dd" aria-label="More"></button>
    <span class="sep"></span>
    <button class="tb" aria-label="Display model"><svg><use href="#vis"/></svg></button><button class="dd" aria-label="More"></button>
  </div>
  <div class="toolbar">
    <span class="grip"></span>
    <button class="tb" aria-label="Deformation"><svg><use href="#frame"/></svg></button>
    <button class="tb" aria-label="Animation"><svg><use href="#cam"/></svg></button>
    <span class="sep"></span>
    <button class="tb" aria-label="Member results"><svg><use href="#ires"/></svg></button>
    <button class="tb" aria-label="Surface results"><svg><use href="#srf"/></svg></button>
    <button class="tb" aria-label="Solid results"><svg><use href="#cube"/></svg></button>
    <button class="tb" aria-label="Reactions"><svg><use href="#grn"/></svg></button>
    <button class="tb" aria-label="Section"><svg><use href="#knife"/></svg></button>
    <button class="tb" aria-label="Multiple windows"><svg><use href="#four"/></svg></button><button class="dd" aria-label="More"></button>
    <button class="tb" aria-label="Result diagram"><svg><use href="#icrv"/></svg></button>
    <button class="tb" aria-label="Result tables"><svg><use href="#rtab"/></svg></button>
    <span class="sep"></span>
    <button class="tb on" aria-label="Panel"><svg><use href="#cpan"/></svg></button>
    <button class="tb" aria-label="Edit section"><svg><use href="#wand"/></svg></button><button class="dd" aria-label="More"></button>
    <button class="tb" aria-label="Colours"><svg><use href="#rb"/></svg></button><button class="dd" aria-label="More"></button>
  </div>
</div>

<main class="work">
  <aside class="side"><button class="side-tab">Project Navigator - Results</button></aside>
  <section class="canvas">
    <p class="legend">Line Hinges n [kN/m]<br>Line Releases n [kN/m]<br>LC1</p>
    <svg class="scene" role="img" aria-label="Plate model with line supports">
      <g transform="translate(-26 -102)">
        <g fill="#12dd12">
          <use href="#support" x="212" y="220"/><use href="#support" x="161" y="276"/><use href="#support" x="109" y="333"/>
        </g>
        <path d="m239 178 351 91v104l-109-28-78 85-319-82z" fill="#a2a2a2"/>
        <g clip-path="url(#plate-clip)">
          <g fill="#5f965f">
            <use href="#support" x="212" y="220"/><use href="#support" x="161" y="276"/><use href="#support" x="109" y="333"/>
            <use href="#support" x="538" y="295"/>
            <path d="m498 330 28-28 44 4v44l-20 8-60-16z" fill-opacity=".8"/>
          </g>
          <use href="#padgrid" x="212" y="220"/><use href="#padgrid" x="161" y="276"/><use href="#padgrid" x="109" y="333"/>
          <use href="#padgrid" x="538" y="295"/><use href="#padgrid" x="528" y="310"/>
        </g>
        <use href="#pad2" x="658" y="376"/>
        <path d="m448 368 34-24 60 18-28 30-58-14z" fill="#41dc41" fill-opacity=".8"/>
        <use href="#pad2" x="499" y="338"/><use href="#pad2" x="461" y="381"/><use href="#pad2" x="423" y="422"/>
        <circle cx="461" cy="380" r="15" fill="#10c510" fill-opacity=".6"/><circle cx="423" cy="422" r="15" fill="#10c510" fill-opacity=".6"/>
        <path d="m239 178 330 86M84 348l319 82M481 345l109 28" stroke="#000" stroke-width="2" fill="none"/>
        <path d="M239 178 84 348M403 430l78-85" stroke="#00fb00" stroke-width="2" fill="none"/>
        <path d="m481 345 77-84" stroke="#c8d400" stroke-width="2"/>
        <g fill="none" stroke="#f00">
          <path d="m452 311 76-84v54l-76 84M509 326l78-84" stroke="#f66"/>
          <path d="M452 311v54M509 326v54" stroke-width="1"/>
          <path d="m452 311 57 15M528 227l59 15v30M452 365l57 15M528 281l41 11" stroke-dasharray="4 1"/>
          <path d="m509 380 65-68" stroke-dasharray="4 1"/>
          <path d="m481 322 77-84M481 345v-23M489 336v-23M496 329v-23M504 320v-23M512 311v-23M519 303v-23M527 295v-23M534 287v-23M542 278v-23M550 270v-23M558 261v-23"/>
        </g>
        <path d="M482 306h30v13h-30z" fill="#d8d5cf" fill-opacity=".8"/>
        <g class="scene-val"><text x="484" y="317">-5.00</text><text x="527" y="233">-5.00</text></g>
        <path d="M237 177h4v3h-4zM82 347h4v3h-4zM401 429h4v3h-4zM479 344h4v3h-4z" fill="#a00000"/>
        <g class="arrow"><path d="M756 324.500 758 327 794 297 799 302 804 285 783 290 788 295 754 322z" fill="#ff4444" stroke="#ff4444"/></g>
      </g>
    </svg>
  </section>

  <div class="ctx" role="menu">
    <button role="menuitem"><svg><use href="#lre"/></svg>Edit Line Release...</button>
    <button role="menuitem"><svg><use href="#lrd"/></svg>Delete Line Release</button>
    <hr>
    <button role="menuitem" class="hot"><svg></svg>Result Diagrams...</button>
    <hr>
    <button role="menuitem" disabled><svg><use href="#inc"/></svg>Increase Size</button>
    <button role="menuitem"><svg><use href="#dec"/></svg>Decrease Size</button>
    <hr>
    <button role="menuitem"><svg><use href="#dprop"/></svg>Display Properties...</button>
  </div>

  <section class="dialog" aria-label="Result Diagram in Section">
    <header class="dlg-title">
      <svg class="i16"><use href="#dlg"/></svg><h2>Result Diagram in Section</h2>
      <button aria-label="Minimize"><svg viewBox="0 0 11 11"><path d="M0 5.500h10"/></svg></button>
      <button aria-label="Maximize"><svg viewBox="0 0 11 11"><path d="M.5.5h9v9h-9z"/></svg></button>
      <button aria-label="Close"><svg viewBox="0 0 11 11"><path d="m0 0 10 10M10 0 0 10"/></svg></button>
    </header>
    <div class="dock dlg-dock">
      <div class="toolbar">
        <span class="grip"></span>
        <select class="w90 white" aria-label="Section"><option></option></select>
        <button class="tb dim" aria-label="Previous"><svg><use href="#la"/></svg></button>
        <button class="tb dim" aria-label="Next"><svg><use href="#ra"/></svg></button>
        <button class="tb" aria-label="Deselect"><svg><use href="#arx"/></svg></button>
      </div>
      <div class="toolbar">
        <span class="grip"></span>
        <select class="w90" aria-label="Type"><option></option></select>
      </div>
      <div class="toolbar">
        <span class="grip"></span>
        <button class="tb" aria-label="Print"><svg><use href="#print"/></svg></button>
        <span class="sep"></span>
        <button class="tb" aria-label="Delete diagrams"><svg><use href="#delr"/></svg></button>
        <span class="sep"></span>
        <button class="tb" aria-label="Zoom in"><svg><use href="#zin"/></svg></button>
        <button class="tb" aria-label="Zoom out"><svg><use href="#zout"/></svg></button>
        <span class="sep"></span>
        <button class="tb" aria-label="Smooth"><svg><use href="#sect"/></svg></button>
        <button class="tb dim" aria-label="Save"><svg><use href="#save"/></svg></button>
        <button class="tb" aria-label="Export to Excel"><svg><use href="#xls"/></svg></button>
        <select class="w157" aria-label="Result set"><option></option></select>
        <button class="tb dim" aria-label="Previous result"><svg><use href="#la"/></svg></button>
        <button class="tb dim" aria-label="Next result"><svg><use href="#ra"/></svg></button>
        <button class="tb" aria-label="Surface"><svg><use href="#slab"/></svg></button>
        <button class="tb" aria-label="Support"><svg><use href="#supg"/></svg></button>
        <button class="tb" aria-label="Flip direction"><svg><use href="#flip"/></svg></button>
        <button class="tb" aria-label="Values"><svg><use href="#bran"/></svg></button>
        <button class="tb on" aria-label="Average line"><svg><use href="#slop"/></svg></button>
        <span class="sep"></span>
        <button class="tb" aria-label="Rib settings"><svg><use href="#hsup"/></svg></button>
        <button class="tb on" aria-label="Rib"><svg><use href="#rsup"/></svg></button>
      </div>
      <div class="toolbar last">
        <span class="grip"></span>
        <button class="tb on" aria-label="Navigator"><svg><use href="#nav"/></svg></button>
        <button class="tb" aria-label="Colours"><svg><use href="#grn"/></svg></button>
      </div>
    </div>

    <div class="dlg-body">
      <div class="navi">
        <header><span>Navigator</span><svg viewBox="0 0 28 10"><path d="M3 1h5v5H3zM7 1v5M1 6.500h9M5.500 7v3M19 1l7 8M26 1l-7 8"/></svg></header>
        <div class="tree">
          <ul>
            <li><i>−</i><label><input type="checkbox" class="mixed">Local Deformations</label>
              <ul>
                <li><label><input type="checkbox"><span>u<small>x</small></span></label></li>
                <li><label><input type="checkbox"><span>u<small>y</small></span></label></li>
                <li><label><input type="checkbox"><span>u<small>z</small></span></label></li>
                <li><label><input type="checkbox"><span>φ<small>x</small></span></label></li>
              </ul></li>
            <li><i>−</i><label><input type="checkbox" class="mixed">Forces</label>
              <ul>
                <li><label><input type="checkbox" checked><span>n</span></label></li>
                <li><label><input type="checkbox" checked><span>v<small>y</small></span></label></li>
                <li><label><input type="checkbox"><span>v<small>z</small></span></label></li>
                <li><label><input type="checkbox"><span>m<small>x</small></span></label></li>
              </ul></li>
          </ul>
          <div class="hscroll"><svg viewBox="0 0 9 9"><path d="M6 1 3 4.500 6 8"/></svg><b></b><svg viewBox="0 0 9 9"><path d="m3 1 3 3.500L3 8"/></svg></div>
        </div>
        <footer><button class="rtab">Results</button><svg viewBox="0 0 24 10"><path d="M5 1v8L1 5zM19 1v8l4-4z"/></svg></footer>
      </div>

      <div class="results">
        <div class="ruler">
          <svg class="scale" role="img" aria-label="Scale from 0 to 1 m">
            <path d="M43.500 20.500h320M43.500 12v16M203.500 12v9M363.500 0v35M123.500 14v7M283.500 14v7" stroke="#000" fill="none"/>
            <path d="M59.500 17v3M75.500 17v3M91.500 17v3M107.500 17v3M139.500 17v3M155.500 17v3M171.500 17v3M187.500 17v3M219.500 17v3M235.500 17v3M251.500 17v3M267.500 17v3M299.500 17v3M315.500 17v3M331.500 17v3M347.500 17v3" stroke="#000"/>
            <circle cx="43.500" cy="20.500" r="2" fill="#fff" stroke="#e00"/><circle cx="363.500" cy="20.500" r="2" fill="#fff" stroke="#e00"/>
            <text x="31" y="9">0.000</text><text x="191" y="9">0.500</text><text x="356" y="9">1.000 m</text><text x="192" y="31">»R1»</text>
          </svg>
          <div class="xpos"><label for="x">x:</label><span class="spin"><input id="x" type="text" value="1.000"><svg viewBox="0 0 8 16"><path d="M0 0h8v16H0z" fill="#e4e4e4"/><path d="M1 6h6L4 3zM1 10h6l-3 3z" fill="#000"/><path d="M0 8h8" stroke="#999"/></svg></span><span>[m]</span><label class="fixed"><input type="checkbox" class="plain">Fixed</label></div>
        </div>

        <div class="columns">
          <div class="charts">
            <article>
              <h3>Forces - n [kN/m]</h3>
              <svg class="plot" role="img" aria-label="Diagram of force n">
                <g transform="translate(-978 -218)">
                  <path d="M1021 275h320v79h-320z" fill="#ff8080"/>
                  <g stroke="#fff"><path d="M1053.500 276v78M1085.500 276v78M1117.500 276v78M1149.500 276v78M1181.500 276v78M1213.500 276v78M1245.500 276v78M1277.500 276v78M1309.500 276v78"/></g>
                  <g stroke="#000" stroke-dasharray="4 3"><path d="M1053.500 276v78M1085.500 276v78M1117.500 276v78M1149.500 276v78M1181.500 276v78M1213.500 276v78M1245.500 276v78M1277.500 276v78M1309.500 276v78"/></g>
                  <path d="M1116.500 276v78M1212.500 276v78M1244.500 276v78M1341.500 275v79" stroke="#000"/>
                  <path d="M1021 354h320" stroke="#000" stroke-width="2"/>
                  <path d="M1021 275.500h320" stroke="#000"/>
                  <path d="M1021 274.500h320M1021.500 275v78" stroke="#f0f"/><path d="M1021.500 275v78" stroke="#000" stroke-dasharray="3 3"/>
                  <path d="M1019 352h5v5h-5zM1339 352h5v5h-5z"/>
                  <path d="M1020 273h3v3h-3zM1052 274h3v3h-3zM1084 274h3v3h-3zM1116 274h3v3h-3zM1148 274h3v3h-3zM1180 274h3v3h-3zM1212 274h3v3h-3zM1244 274h3v3h-3zM1276 274h3v3h-3zM1308 274h3v3h-3z" fill="#808080"/>
                  <path d="M1340 273h3v3h-3z" fill="#f00"/>
                  <g class="val">
                    <text transform="translate(1025 270) rotate(-90)">-5.00</text><text transform="translate(1057 270) rotate(-90)">-5.00</text><text transform="translate(1089 270) rotate(-90)">-5.00</text><text transform="translate(1121 270) rotate(-90)">-5.00</text><text transform="translate(1153 270) rotate(-90)">-5.00</text><text transform="translate(1185 270) rotate(-90)">-5.00</text><text transform="translate(1217 270) rotate(-90)">-5.00</text><text transform="translate(1249 270) rotate(-90)">-5.00</text><text transform="translate(1281 270) rotate(-90)">-5.00</text><text transform="translate(1313 270) rotate(-90)">-5.00</text>
                    <text class="max" transform="translate(1345 270) rotate(-90)">-5.00</text>
                    <text class="avg" transform="translate(1015 288) rotate(-90)">-5.00</text><text class="avg" transform="translate(1354 288) rotate(-90)">-5.00</text>
                  </g>
                  <path d="M1275 252h65v22l-5-4h-60z" fill="#f0f0f0"/>
                  <text class="tip" x="1333" y="265">-5.00 kN/m</text>
                  <g class="sum"><text x="1354" y="235">Sum: -5.00 [kN]</text><text x="1354" y="250">Average: -5.00 [kN/m]</text></g>
                </g>
              </svg>
            </article>
            <article>
              <h3>Forces - v<small>y</small> [kN/m]</h3>
              <svg class="plot" role="img" aria-label="Diagram of force v-y">
                <g transform="translate(-978 -448)">
                  <path d="M1021 560v23l32-2 32-6 32-4 32-4 32-4 32-3z" fill="#a6caf0"/>
                  <path d="m1213 560 32-4 32-7 32-14 32-29v54z" fill="#ff8080"/>
                  <path d="M1053.500 561v19M1085.500 561v14M1117.500 561v10M1149.500 561v6M1277.500 549v11M1309.500 536v24" stroke="#fff"/>
                  <path d="M1053.500 561v19M1085.500 561v14M1117.500 561v10M1149.500 561v6M1181.500 561v3M1277.500 549v11M1309.500 536v24" stroke="#000" stroke-dasharray="4 3"/>
                  <path d="M1116.500 561v10M1341.500 506v54" stroke="#000"/>
                  <path d="m1021 583 32-2 32-6 32-4 32-4 32-4 32-3 32-4 32-7 32-14 32-29" fill="none" stroke="#222"/>
                  <path d="M1021 560h320" stroke="#000" stroke-width="2"/>
                  <path d="m1021 589 320-59M1021.500 561v28" stroke="#f0f" fill="none"/><path d="M1021.500 561v21" stroke="#000" stroke-dasharray="3 3"/>
                  <path d="M1019 558h5v5h-5zM1339 558h5v5h-5z"/>
                  <path d="M1052 579h3v3h-3zM1084 574h3v3h-3zM1116 570h3v3h-3zM1148 566h3v3h-3zM1180 562h3v3h-3zM1212 559h3v3h-3zM1244 554h3v3h-3zM1276 547h3v3h-3zM1308 534h3v3h-3z" fill="#808080"/>
                  <path d="M1020 582h3v3h-3z" fill="#00f"/><path d="M1340 503h3v3h-3z" fill="#f00"/>
                  <g class="val">
                    <text class="avg" transform="translate(1015 604) rotate(-90)">14.61</text>
                    <text class="min" transform="translate(1026 615) rotate(-90)">11.64</text>
                    <text transform="translate(1058 613) rotate(-90)">10.00</text><text transform="translate(1090 602) rotate(-90)">7.77</text><text transform="translate(1122 598) rotate(-90)">5.77</text><text transform="translate(1154 594) rotate(-90)">3.86</text><text transform="translate(1186 590) rotate(-90)">1.91</text>
                    <text transform="translate(1217 556) rotate(-90)">-0.20</text><text transform="translate(1249 550) rotate(-90)">-2.70</text><text transform="translate(1281 543) rotate(-90)">-6.06</text><text transform="translate(1313 530) rotate(-90)">-12.39</text>
                    <text class="max" transform="translate(1345 498) rotate(-90)">-27.56</text>
                    <text class="avg" transform="translate(1354 547) rotate(-90)">-14.61</text>
                  </g>
                  <path d="M1269 482h71v22l-5-4h-66z" fill="#f0f0f0"/>
                  <text class="tip" x="1333" y="495">-27.56 kN/m</text>
                  <g class="sum"><text x="1354" y="465">Sum: 0 [kN]</text><text x="1354" y="480">Average: 0 [kN/m]</text></g>
                </g>
              </svg>
            </article>
            <span class="cursor"></span>
          </div>

          <div class="tables">
            <section>
              <fieldset>
                <h4>Forces n</h4>
                <table>
                  <colgroup><col class="c1"><col class="c2"><col><col class="c4"></colgroup>
                  <thead><tr><th colspan="2">x<br>[m]</th><th colspan="2">n<br>[kN/m]</th></tr></thead>
                  <tbody>
                    <tr><td><svg class="mark" viewBox="0 0 16 16"><path d="M2 11.500h9" stroke="#000" stroke-width="2"/><circle cx="3" cy="11.500" r="2" fill="#00c"/></svg></td><td>0.000</td><td>-5.00</td><td rowspan="7" class="sc"><div><svg viewBox="0 0 9 9"><path d="M1 6l3.500-3L8 6"/></svg><b></b><svg viewBox="0 0 9 9"><path d="m1 3 3.500 3L8 3"/></svg></div></td></tr>
                    <tr><td></td><td>0.100</td><td>-5.00</td></tr><tr><td></td><td>0.200</td><td>-5.00</td></tr><tr><td></td><td>0.300</td><td>-5.00</td></tr><tr><td></td><td>0.400</td><td>-5.00</td></tr><tr><td></td><td>0.500</td><td>-5.00</td></tr><tr><td></td><td>0.600</td><td>-5.00</td></tr>
                  </tbody>
                </table>
                <div class="opts"><label><input type="checkbox" class="plain">Max/min only</label><label><input type="checkbox" class="plain">Ends only</label></div>
              </fieldset>
            </section>
            <section>
              <fieldset>
                <h4>Forces v-y</h4>
                <table>
                  <colgroup><col class="c1"><col class="c2"><col><col class="c4"></colgroup>
                  <thead><tr><th colspan="2">x<br>[m]</th><th colspan="2">v<small>y</small><br>[kN/m]</th></tr></thead>
                  <tbody>
                    <tr><td><svg class="mark" viewBox="0 0 16 16"><path d="M2 12.500h9" stroke="#000" stroke-width="2"/><circle cx="3" cy="12.500" r="2" fill="#00c"/><text x="0" y="7">MAX</text></svg></td><td>0.000</td><td>11.64</td><td rowspan="7" class="sc"><div><svg viewBox="0 0 9 9"><path d="M1 6l3.500-3L8 6"/></svg><b></b><svg viewBox="0 0 9 9"><path d="m1 3 3.500 3L8 3"/></svg></div></td></tr>
                    <tr><td></td><td>0.100</td><td>10.00</td></tr><tr><td></td><td>0.200</td><td>7.77</td></tr><tr><td></td><td>0.300</td><td>5.77</td></tr><tr><td></td><td>0.400</td><td>3.86</td></tr><tr><td></td><td>0.500</td><td>1.91</td></tr><tr><td></td><td>0.600</td><td>-0.20</td></tr>
                  </tbody>
                </table>
                <div class="opts"><label><input type="checkbox" class="plain">Max/min only</label><label><input type="checkbox" class="plain">Ends only</label></div>
              </fieldset>
            </section>
          </div>
          <div class="vscroll"><svg viewBox="0 0 9 9"><path d="M1 6l3.500-3L8 6"/></svg><b></b><svg viewBox="0 0 9 9"><path d="m1 3 3.500 3L8 3"/></svg></div>
        </div>
      </div>
    </div>

    <footer class="status"><span class="loc">Location x: 1.000 m</span><span>Start X,Y,Z:<em>0.000, 0.000, 0.000 m</em></span><span>End X,Y,Z:<em>0.000, 0.000, 0.000 m</em></span><span class="vec">Vector X,Y,Z:<em>0.000, 0.000, 0.000 m</em></span><svg viewBox="0 0 12 12"><path d="M9 1h2v2H9zM9 5h2v2H9zM5 5h2v2H5zM9 9h2v2H9zM5 9h2v2H5zM1 9h2v2H1z" fill="#6d7482"/></svg></footer>
  </section>
</main>
</body>
</html>
```

FILE: styles.css
```css
* { box-sizing: border-box; }
html, body { height: 100%; }
body {
  margin: 0;
  display: flex;
  flex-direction: column;
  overflow: hidden;
  background: #fff;
  color: #1e1e1e;
  font: 11px/14px "Open Sans", "Noto Sans", sans-serif;
}
button, input, select { font: inherit; color: inherit; margin: 0; }
button { background: none; border: 0; padding: 0; }
h1, h2, h3, h4, p, ul { margin: 0; padding: 0; font: inherit; }
.defs { position: absolute; width: 0; height: 0; }
.i16 { width: 16px; height: 16px; flex: none; }
.ic-s { font: bold 7px "Liberation Serif", serif; }
.ic-m { font: 10px "Liberation Serif", serif; }

.titlebar { display: flex; align-items: center; gap: 5px; height: 23px; padding-left: 2px; color: #8c8c8c; flex: none; }
.menubar { display: flex; align-items: center; height: 24px; background: #d0d4dd; padding-left: 2px; color: #3f444d; flex: none; }
.menubar button { padding: 0 8px; height: 22px; }
.menubar .docicon { width: 16px; height: 14px; margin-right: 2px; }
.menubar u { text-underline-offset: 2px; }

.dock { display: flex; background: #cfd3dc; height: 26px; flex: none; }
.toolbar {
  display: flex;
  align-items: center;
  height: 26px;
  padding: 0 2px;
  background: linear-gradient(#eef1f8, #dfe3ec 60%, #d3d7e0);
  border-bottom: 2px solid #a9adb7;
  border-radius: 3px;
  flex: none;
}
.grip { width: 8px; height: 18px; flex: none; background: radial-gradient(circle at 3px 2px, #fff 1px, #a6abb6 1px, transparent 2px) 0 0 / 8px 5px; }
.tb { display: grid; place-items: center; width: 22px; height: 22px; flex: none; }
.tb svg { width: 16px; height: 16px; display: block; overflow: visible; }
.tb.on { background: linear-gradient(#ffc77a, #ffdf9e 60%, #fff0b8); border: 1px solid #b5a27e; border-radius: 2px; }
.tb.dim { opacity: .55; }
.dd { width: 13px; height: 22px; display: grid; place-items: center; flex: none; }
.dd::after { content: ""; border: 3px solid transparent; border-top: 4px solid #6e737c; border-bottom: 0; }
.sep { width: 8px; height: 14px; flex: none; background: linear-gradient(#a9aeb9, #a9aeb9) 3px 0 / 1px 100% no-repeat, linear-gradient(#fff, #fff) 4px 0 / 1px 100% no-repeat; }
select {
  appearance: none;
  height: 19px;
  padding: 0 4px;
  border: 1px solid #8e939d;
  border-radius: 0;
  background: linear-gradient(45deg, transparent 50%, #777 50%) right 9px center / 3px 3px no-repeat, linear-gradient(-45deg, transparent 50%, #777 50%) right 6px center / 3px 3px no-repeat, #f0f0f0;
  color: #000;
}
.lc-select { width: 216px; margin: 0 2px 0 3px; padding: 0 2px; }
.w90 { width: 90px; margin: 0 3px 0 2px; }
.w157 { width: 157px; margin: 0 2px; }
select.white { background-color: #fff; }

.work { display: flex; flex: 1; min-height: 0; position: relative; border-top: 1px solid #a9adb7; }
.side { width: 24px; background: #cfd3dd; padding-top: 3px; flex: none; }
.side-tab {
  writing-mode: vertical-rl;
  width: 21px;
  height: 173px;
  padding-top: 3px;
  text-align: left;
  font: 12px/20px "Liberation Sans", sans-serif;
  color: #55565a;
  background: linear-gradient(90deg, #fff0c0, #ffdc85);
  border: 1px solid #a9adbb;
  border-left: 0;
}
.canvas { flex: 1; position: relative; background: #fff; border: 2px solid #6a6a6c; border-width: 2px 0 0 1px; overflow: hidden; }
.legend { padding: 4px; font: 11px/14px "Liberation Sans", sans-serif; color: #000; }
.scene { position: absolute; inset: 0; width: 100%; height: 100%; }
.scene-val { font: bold 11px "Liberation Sans", sans-serif; fill: #ff4a4a; }
.arrow { filter: drop-shadow(2px 3px 2px rgba(0, 0, 0, .4)); }

/* The menu floats over the model at the clicked line release. */
.ctx {
  position: absolute;
  left: 569px;
  top: 158px;
  width: 183px;
  padding: 2px 1px;
  border: 1px solid #808080;
  border-radius: 2px;
  background: linear-gradient(90deg, #e9edf6 25px, #c5c8d0 25px, #c5c8d0 26px, #fafafa 26px);
  box-shadow: 3px 3px 2px rgba(0, 0, 0, .35);
}
.ctx button { display: flex; align-items: center; gap: 11px; width: 100%; height: 22px; padding-left: 3px; color: #444a55; }
.ctx button svg { width: 16px; height: 16px; flex: none; }
.ctx button:disabled { color: #a3a5a8; }
.ctx hr { height: 1px; margin: 3px 0 4px 31px; border: 0; background: #bdbfc3; }
.ctx .hot { background: linear-gradient(#fff8dc, #ffe9a0 45%, #ffd335 50%, #ffe07a); outline: 3px solid #f94545; }

.dialog {
  position: absolute;
  left: 811px;
  right: 0;
  top: 4px;
  bottom: 0;
  display: flex;
  flex-direction: column;
  border: 1px solid #3ba8e8;
  background: #cfd3dd;
}
.dlg-title { display: flex; align-items: center; height: 30px; padding-left: 8px; background: #fff; color: #000; flex: none; }
.dlg-title h2 { flex: 1; padding-left: 5px; }
.dlg-title button { width: 46px; height: 30px; }
.dlg-title button svg { width: 11px; height: 11px; fill: none; stroke: #000; overflow: visible; }
.dlg-dock { overflow: hidden; padding-left: 1px; height: 27px; }
.dlg-dock .toolbar { padding: 0 1px; }
.dlg-dock .toolbar:nth-child(3) { margin-left: 2px; }
.dlg-dock .last { flex: 1 0 36px; margin-left: 4px; }

.dlg-body { display: flex; flex: 1; min-height: 0; }
.navi { width: 160px; display: flex; flex-direction: column; flex: none; padding-left: 1px; }
.navi header { display: flex; align-items: center; justify-content: space-between; height: 19px; padding: 0 4px 0 3px; background: #b9c0cb; color: #3f444d; }
.navi header svg { width: 28px; height: 10px; fill: none; stroke: #555a64; }
.tree { flex: 1; display: flex; flex-direction: column; justify-content: space-between; background: #fff; border: 1px solid #9aa0ac; border-bottom-color: #777; padding: 2px 1px; color: #000; }
.tree ul { list-style: none; }
.tree > ul > li { padding-left: 24px; position: relative; height: 90px; }
.tree > ul > li:first-child::before { content: ""; position: absolute; left: 12px; top: 14px; bottom: -5px; border-left: 1px dotted #777; }
.tree > ul > li::after { content: ""; position: absolute; left: 18px; top: 9px; width: 5px; border-top: 1px dotted #777; }
.tree li ul { border-left: 1px dotted #777; margin: 0 0 0 7px; height: 64px; }
.tree li li { padding-left: 11px; background: linear-gradient(90deg, #999 0 1px, transparent 1px) 0 9px / 2px 1px repeat-x; height: 18px; }
.tree li li label { background: #fff; }
.tree label { display: flex; align-items: center; gap: 4px; height: 18px; }
.tree i { position: absolute; left: 8px; top: 5px; width: 9px; height: 9px; border: 1px solid #8b93a5; border-radius: 1px; background: #fff; font: 9px/7px "Liberation Sans", sans-serif; text-align: center; color: #2440a0; z-index: 1; }
.tree li li span { font-size: 12px; }
.tree small, h3 small, th small { font-size: 10px; position: relative; top: 2px; }
input[type="checkbox"] { appearance: none; width: 13px; height: 13px; flex: none; border: 1px solid #4a4d55; background: linear-gradient(135deg, #d2d7e0, #fbfcfe); position: relative; }
input.mixed::after { content: ""; position: absolute; inset: 2px; background: #999; }
.tree input:checked::after { content: ""; position: absolute; left: 3px; top: 1px; width: 4px; height: 7px; border: solid #000; border-width: 0 2px 2px 0; transform: rotate(40deg); }
input[type="checkbox"].plain { background: #fff; border-color: #333; }
.hscroll { display: flex; align-items: center; height: 15px; background: #f0f0f0; }
.hscroll b { flex: 0 1 106px; height: 15px; background: #cdcdcd; }
.hscroll svg:last-child { margin-left: auto; }
.hscroll svg, .vscroll svg, .sc svg { width: 9px; height: 9px; margin: 4px; fill: none; stroke: #555; stroke-width: 2; flex: none; overflow: visible; }
.navi footer { display: flex; justify-content: space-between; align-items: flex-start; height: 20px; padding: 0 7px 0 4px; }
.navi footer svg { width: 24px; height: 10px; margin-top: 6px; fill: none; stroke: #777; }
.rtab { height: 17px; padding: 0 3px; background: #f3f5f5; border: 1px solid #b5d5da; border-top: 0; border-radius: 0 0 3px 3px; color: #3f444d; }

.results { flex: 1; display: flex; flex-direction: column; min-width: 0; margin: 0 1px 2px 5px; border: 1px solid #6a6a6c; border-width: 1px 0 0 1px; background: #f0f0f0; }
.ruler { display: flex; height: 36px; border-bottom: 1px solid #6a6a6c; flex: none; }
.scale { flex: 1; min-width: 0; height: 35px; font: 10px "Liberation Sans", sans-serif; fill: #222; }
.xpos { display: flex; align-items: center; width: 189px; gap: 5px; padding-bottom: 4px; flex: none; }
.spin { display: flex; align-items: center; width: 64px; height: 20px; background: #fff; border: 1px solid #7f9db9; }
.spin input { flex: 1; min-width: 0; border: 0; text-align: right; padding: 0 2px 0 0; background: none; }
.spin svg { width: 8px; height: 16px; margin-right: 1px; }
.fixed { display: flex; align-items: center; gap: 3px; margin-left: 14px; }

.columns { flex: 1; display: flex; min-height: 0; }
.charts { flex: 1; position: relative; min-width: 0; background: #fff; display: flex; flex-direction: column; }
.charts article { flex: 1; display: flex; flex-direction: column; min-height: 0; }
.charts article + article { border-top: 2px solid #f0f0f0; }
.charts h3 { height: 19px; padding-left: 10px; background: #dcdcdc; font: bold 11px/18px "Liberation Sans", sans-serif; color: #44464a; flex: none; }
.plot { flex: 1; width: 100%; min-height: 0; }
.cursor { position: absolute; left: 363px; top: 0; bottom: 0; width: 1px; background: #808080; }
.val { font: 11px "Liberation Sans", sans-serif; }
.val .avg { fill: #f0f; }
.val .max { fill: #f00; font-weight: bold; }
.val .min { fill: #00f; font-weight: bold; }
.tip { text-anchor: end; fill: #000; }
.sum { fill: #4a4a4a; }

.tables { width: 197px; display: flex; flex-direction: column; flex: none; }
.tables section { flex: 1; padding: 9px 8px 0 9px; margin-left: 2px; }
.tables section + section { border-top: 2px solid #bdbdbd; padding-top: 8px; }
fieldset { margin: 0; padding: 0 1px 1px 0; border: 0; border-right: 1px solid #a8aee6; border-bottom: 1px solid #a8aee6; background: #f1f4fa; min-width: 0; }
fieldset h4 { height: 17px; padding-left: 2px; background: linear-gradient(225deg, #f0f0f0 7px, #dbe5f4 7px); color: #1c3f66; line-height: 16px; margin-right: -2px; }
table { width: 100%; border-collapse: separate; border-spacing: 0; table-layout: fixed; border: 1px solid #5f6065; background: #fff; color: #111; }
.c1 { width: 21px; } .c2 { width: 60px; } .c4 { width: 17px; }
th { height: 30px; padding: 2px 0 0; font-weight: normal; line-height: 13px; background: #f1f4fa; border-bottom: 1px solid #5f6065; }
th + th { border-left: 1px solid #5f6065; }
td { height: 19px; padding: 0 5px 0 0; text-align: right; line-height: 18px; border-bottom: 1px solid #ececec; border-right: 1px solid #ececec; }
td:nth-child(2) { padding-right: 12px; }
td:first-child { padding: 0; }
.mark { display: block; width: 16px; height: 16px; margin-left: 5px; overflow: visible; }
.mark text { font: bold 7px "Liberation Mono", monospace; fill: #00c; }
td.sc { padding: 0; background: #f0f0f0; border: 0; }
.sc div { display: flex; flex-direction: column; height: 132px; }
.sc b { flex: 0 0 63px; background: #cdcdcd; }
.sc svg:last-child { margin-top: auto; }
.opts { display: flex; justify-content: space-between; align-items: center; height: 22px; padding: 0 12px 0 1px; color: #111; }
.opts label { display: flex; align-items: center; gap: 3px; }
.vscroll { width: 17px; display: flex; flex-direction: column; flex: none; }
.vscroll b { flex: 0 1 390px; width: 15px; background: #cdcdcd; }
.vscroll svg:last-child { margin-top: auto; }

.status { display: flex; align-items: center; height: 20px; border-top: 1px solid #9298a4; background: linear-gradient(#c3c7d0, #a9aeba 60%, #b6bbc6); color: #26282c; flex: none; }
.status span { width: 193px; padding-left: 6px; border-left: 1px solid #7d838f; line-height: 17px; white-space: nowrap; flex: none; }
.status .loc { flex: 1; border: 0; padding-left: 4px; }
.status .vec { width: 189px; }
.status em { font-style: normal; padding-left: 9px; }
.status svg { width: 12px; height: 12px; margin: 4px 1px 0 3px; }
```
